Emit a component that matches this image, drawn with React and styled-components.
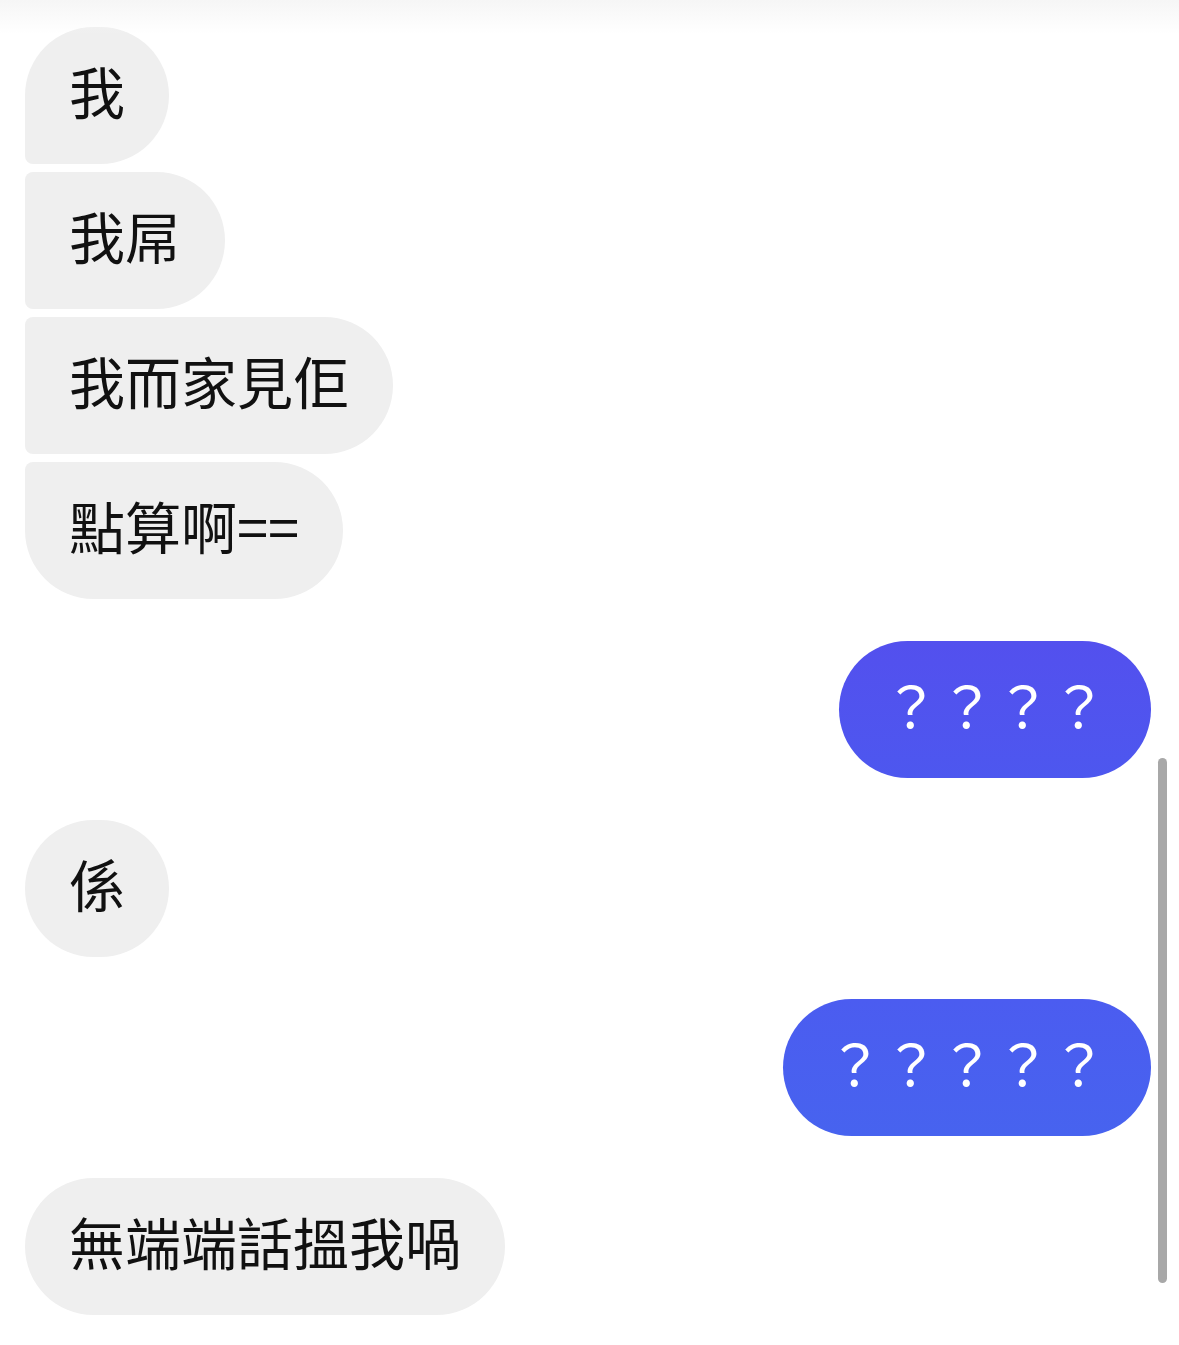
import React from "react";
import styled, { createGlobalStyle } from "styled-components";

const GlobalStyle = createGlobalStyle`
  html, body {
    margin: 0;
    padding: 0;
    background: #fff;
    overflow: hidden;
  }
  * {
    box-sizing: border-box;
  }
`;

// 말풍선 그룹: 같은 사람이 연속으로 보낸 메시지
const messages = [
  { side: "in", texts: ["我", "我屌", "我而家見佢", "點算啊=="] },
  { side: "out", texts: ["？？？？"], tone: "violet" },
  { side: "in", texts: ["係"] },
  { side: "out", texts: ["？？？？？"], tone: "blue" },
  { side: "in", texts: ["無端端話搵我喎"] },
];

const BIG = "68.5px";
const SMALL = "8px";

// 그룹 안의 위치에 따라 왼쪽 모서리 둥글기가 달라진다
const radiusFor = (side, pos) => {
  if (side === "out") return BIG;
  const tl = pos === "single" || pos === "first" ? BIG : SMALL;
  const bl = pos === "single" || pos === "last" ? BIG : SMALL;
  return `${tl} ${BIG} ${BIG} ${bl}`;
};

const gradients = {
  violet: "linear-gradient(180deg, #5350ee 0%, #4d57ef 100%)",
  blue: "linear-gradient(180deg, #4b5cf0 0%, #4763ef 100%)",
};

function App() {
  return (
    <>
      <GlobalStyle />
      <StScreen>
        <StTopShade />
        <StThread>
          {messages.map((group, gi) => (
            <StGroup key={gi} $side={group.side}>
              {group.texts.map((text, i) => {
                const n = group.texts.length;
                const pos =
                  n === 1 ? "single" : i === 0 ? "first" : i === n - 1 ? "last" : "middle";
                return (
                  <StBubble key={i} $side={group.side} $pos={pos} $tone={group.tone}>
                    {text}
                  </StBubble>
                );
              })}
            </StGroup>
          ))}
        </StThread>
        <StScrollbar />
      </StScreen>
    </>
  );
}

const StScreen = styled.div`
  position: relative;
  width: 1179px;
  height: 1345px;
  background: #fff;
  overflow: hidden;
`;

const StTopShade = styled.div`
  position: absolute;
  top: 0;
  left: 0;
  right: 0;
  height: 34px;
  background: linear-gradient(180deg, #f6f6f6 0%, rgba(255, 255, 255, 0) 100%);
`;

const StThread = styled.div`
  display: flex;
  flex-direction: column;
  gap: 42px;
  padding: 27px 28px 0 25px;
`;

const StGroup = styled.div`
  display: flex;
  flex-direction: column;
  align-items: ${(p) => (p.$side === "out" ? "flex-end" : "flex-start")};
  gap: 8px;
`;

const StBubble = styled.div`
  height: 137px;
  display: flex;
  align-items: center;
  padding: 0 44px 12px;

  border-radius: ${(p) => radiusFor(p.$side, p.$pos)};
  background: ${(p) => (p.$side === "out" ? gradients[p.$tone] : "#efefef")};

  font-family: "Noto Sans CJK TC", "Noto Sans CJK SC", sans-serif;
  font-size: 56px;
  font-weight: 400;
  line-height: 1;
  white-space: nowrap;
  color: ${(p) => (p.$side === "out" ? "#fff" : "#111")};
`;

const StScrollbar = styled.div`
  position: absolute;
  top: 758px;
  right: 12px;
  width: 9px;
  height: 525px;
  border-radius: 5px;
  background: #a8a8a8;
`;

export default App;
